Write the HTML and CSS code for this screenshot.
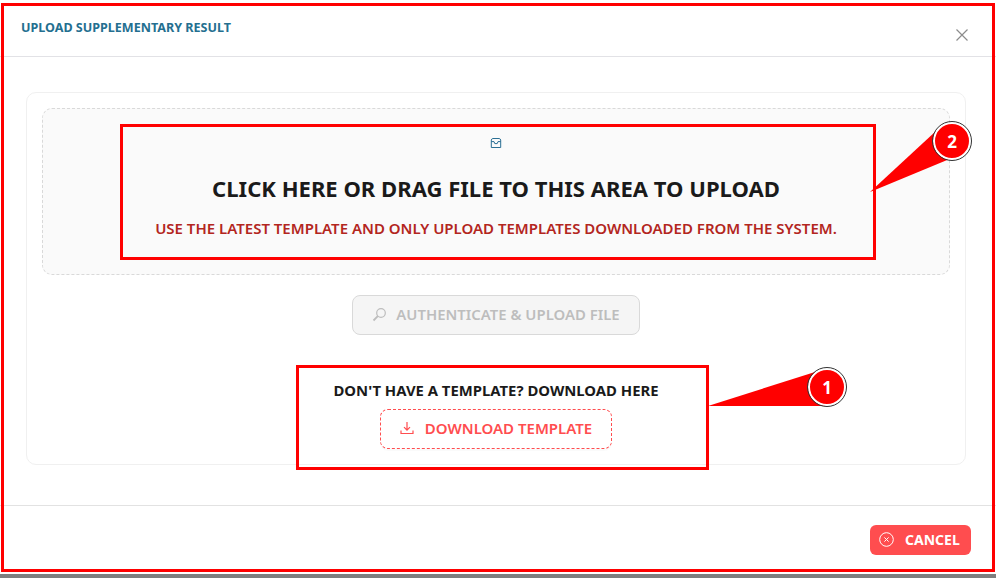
FILE: index.html
```html
<!DOCTYPE html>
<html lang="en">
<head>
<meta charset="utf-8">
<title>Upload supplementary result</title>
<link rel="stylesheet" href="styles.css">
</head>
<body>
<div class="modal">
  <header class="modal-head">
    <h1 class="modal-title">UPLOAD SUPPLEMENTARY RESULT</h1>
    <button class="close" aria-label="Close">
      <svg width="12" height="12" viewBox="0 0 12 12"><path d="M0.5 0.5L11.5 11.5M11.5 0.5L0.5 11.5" stroke="#8c8c8c" stroke-width="1.2" fill="none"/></svg>
    </button>
  </header>
  <main class="modal-body">
    <section class="card">
      <div class="dropzone">
        <svg class="inbox" width="12" height="12" viewBox="0 0 12 12" fill="none" stroke="#2b6f94" stroke-width="1"><path d="M2.8 1.5H9.2Q10.2 1.5 10.7 3V10.5H1.3V3Q1.8 1.5 2.8 1.5ZM1.3 4.6H4L4.8 6.6H7.2L8 4.6H10.7"/></svg>
        <p class="drop-title">CLICK HERE OR DRAG FILE TO THIS AREA TO UPLOAD</p>
        <p class="drop-hint">USE THE LATEST TEMPLATE AND ONLY UPLOAD TEMPLATES DOWNLOADED FROM THE SYSTEM.</p>
      </div>
      <button class="auth" disabled>
        <svg width="15" height="15" viewBox="0 0 15 15" fill="none" stroke="#bdbdbd" stroke-width="1.2"><circle cx="9" cy="6" r="4.3"/><path d="M5.8 9.2L1.5 13.5" stroke-width="1.8"/></svg>
        <span>AUTHENTICATE &amp; UPLOAD FILE</span>
      </button>
      <p class="tpl-text">DON'T HAVE A TEMPLATE? DOWNLOAD HERE</p>
      <button class="download">
        <svg width="14" height="14" viewBox="0 0 14 14" fill="none" stroke="#ff4d4f" stroke-width="1.2"><path d="M7 1V9M4 6.2L7 9.2L10 6.2M1 9.5V12.5H13V9.5"/></svg>
        <span>DOWNLOAD TEMPLATE</span>
      </button>
    </section>
  </main>
  <footer class="modal-foot">
    <button class="cancel">
      <svg width="15" height="15" viewBox="0 0 15 15" fill="none" stroke="#fff" stroke-width="1"><circle cx="7.5" cy="7.5" r="6.8"/><path d="M5.4 5.4L9.6 9.6M9.6 5.4L5.4 9.6"/></svg>
      <span>CANCEL</span>
    </button>
  </footer>
</div>

<div class="mark mark-outer"></div>
<div class="mark mark-drop"></div>
<div class="mark mark-tpl"></div>
<svg class="pointers" width="996" height="578" viewBox="0 0 996 578">
  <polygon points="870,192 936,131 952,158" fill="#ff0000"/>
  <polygon points="708,406 815,372 825,406" fill="#ff0000"/>
</svg>
<div class="badge badge-2">2</div>
<div class="badge badge-1">1</div>
</body>
</html>
```
FILE: styles.css
```css
* { box-sizing: border-box; }
html, body { margin: 0; padding: 0; }
body {
  width: 996px;
  height: 578px;
  background: #7f7f7f;
  overflow: hidden;
  position: relative;
  font-family: "Noto Sans", "Open Sans", sans-serif;
}
button { font-family: inherit; cursor: pointer; }
p, h1 { margin: 0; }

.modal {
  width: 996px;
  height: 574px;
  background: #fff;
  display: flex;
  flex-direction: column;
}
.modal-head {
  height: 57px;
  flex: none;
  border-bottom: 1px solid #e2e2e6;
  display: flex;
  justify-content: space-between;
  padding: 19px 28px 0 21px;
}
.modal-title {
  font-size: 12.55px;
  line-height: 18px;
  font-weight: 700;
  color: #246f90;
}
.close {
  width: 12px;
  height: 12px;
  margin-top: 10px;
  padding: 0;
  border: 0;
  background: none;
  display: flex;
}
.modal-body {
  flex: 1;
  padding: 35px 30px 0 26px;
}
.card {
  height: 373px;
  border: 1px solid #f0f0f0;
  border-radius: 10px;
  padding: 15px;
  display: flex;
  flex-direction: column;
  align-items: center;
}
.dropzone {
  width: 908px;
  height: 167px;
  flex: none;
  background: #fafafa;
  border: 1px dashed #d9d9d9;
  border-radius: 10px;
  display: flex;
  flex-direction: column;
  align-items: center;
  padding-top: 28px;
}
.inbox { display: block; }
.drop-title {
  margin-top: 24px;
  font-size: 22.05px;
  line-height: 30px;
  font-weight: 700;
  color: #1a1a1a;
}
.drop-hint {
  margin-top: 13px;
  font-size: 15px;
  line-height: 24px;
  font-weight: 600;
  color: #b3261e;
}
.auth {
  margin-top: 20px;
  width: 288px;
  height: 40px;
  flex: none;
  background: #f5f5f5;
  border: 1px solid #d9d9d9;
  border-radius: 8px;
  display: flex;
  align-items: center;
  justify-content: center;
  gap: 9px;
  padding: 0 0 2px;
  font-size: 14.9px;
  font-weight: 600;
  color: #bdbdbd;
}
.tpl-text {
  margin-top: 45px;
  font-size: 14.87px;
  line-height: 20px;
  font-weight: 700;
  color: #1a1a1a;
}
.download {
  margin-top: 9px;
  width: 232px;
  height: 40px;
  flex: none;
  background: #fff;
  border: 1px dashed #ff4d4f;
  border-radius: 8px;
  box-shadow: 0 2px 0 rgba(0, 0, 0, 0.02);
  display: flex;
  align-items: center;
  justify-content: center;
  gap: 11px;
  padding: 0 0 2px;
  font-size: 15px;
  font-weight: 600;
  color: #ff4d4f;
}
.modal-foot {
  height: 69px;
  flex: none;
  border-top: 1px solid #e2e2e2;
  display: flex;
  justify-content: flex-end;
  padding: 19px 25px 0 0;
}
.cancel {
  width: 101px;
  height: 30px;
  background: #ff4d4f;
  border: 0;
  border-radius: 6px;
  color: #fff;
  display: flex;
  align-items: center;
  gap: 11px;
  padding: 0 0 2px 9px;
  font-size: 14px;
  font-weight: 700;
}

/* Annotations painted over the screenshot */
.mark { position: absolute; border: 3px solid #ff0000; }
.mark-outer { left: 1px; top: 3px; width: 994px; height: 569px; }
.mark-drop { left: 120px; top: 124px; width: 756px; height: 136px; }
.mark-tpl { left: 296px; top: 365px; width: 413px; height: 105px; }
.pointers { position: absolute; left: 0; top: 0; }
.badge {
  position: absolute;
  width: 38px;
  height: 38px;
  border-radius: 50%;
  background: #ff0000;
  border: 2px solid #fff;
  outline: 1px solid #333;
  color: #fff;
  font-size: 17px;
  font-weight: 700;
  display: flex;
  align-items: center;
  justify-content: center;
}
.badge-2 { left: 933px; top: 122px; }
.badge-1 { left: 808px; top: 368px; }
```
